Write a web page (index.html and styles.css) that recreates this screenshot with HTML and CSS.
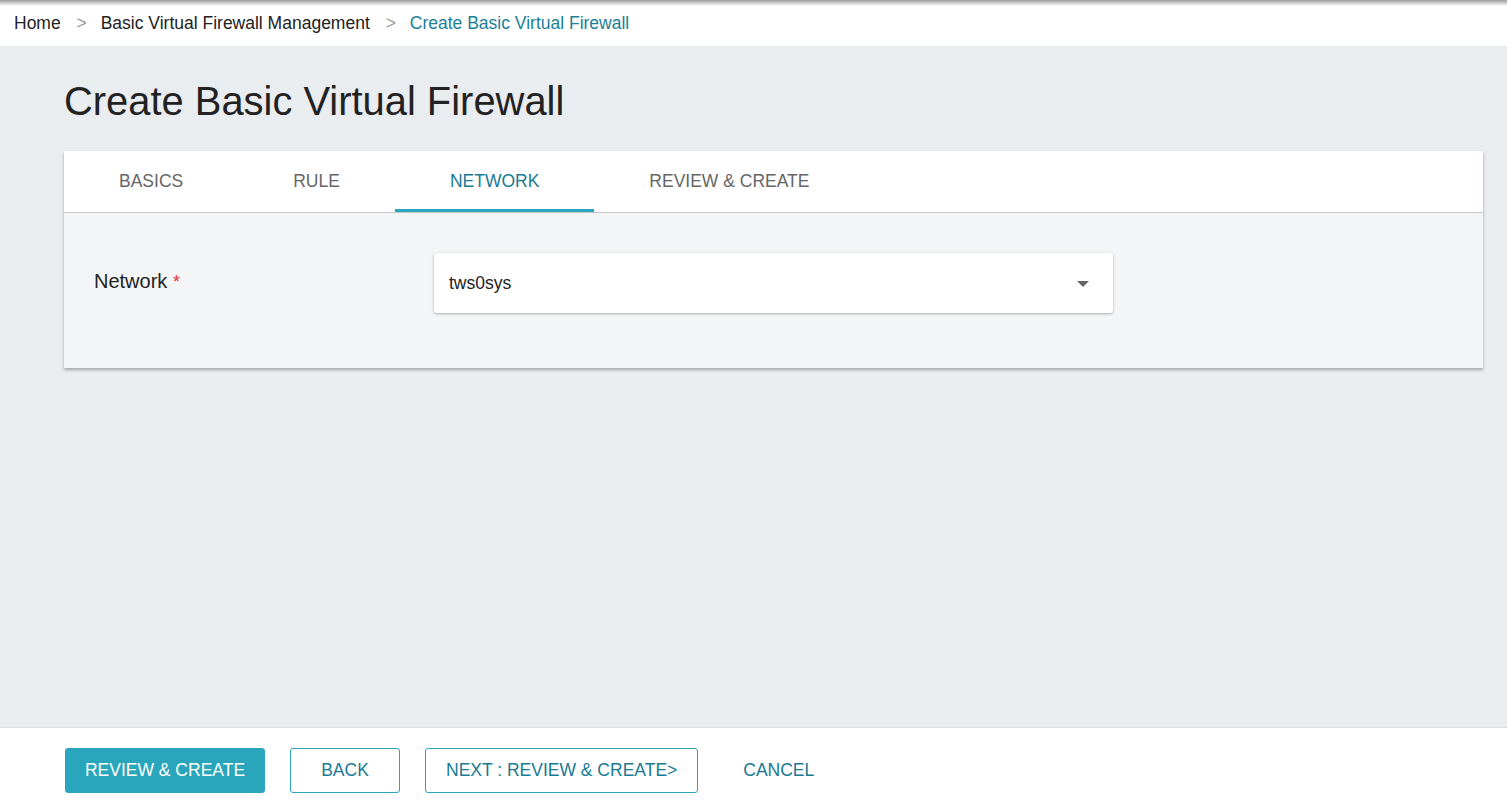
FILE: index.html
```html
<!DOCTYPE html>
<html lang="en">
<head>
    <meta charset="UTF-8">
    <meta name="viewport" content="width=device-width, initial-scale=1.0">
    <title>Create Basic Virtual Firewall</title>
    <link rel="stylesheet" href="styles.css">
</head>
<body>
    <nav class="breadcrumb">
        <a href="#">Home</a>
        <span class="sep">&gt;</span>
        <a href="#">Basic Virtual Firewall Management</a>
        <span class="sep">&gt;</span>
        <span class="current">Create Basic Virtual Firewall</span>
    </nav>

    <main class="content">
        <h1 class="page-title">Create Basic Virtual Firewall</h1>

        <div class="wizard">
            <ul class="tabs">
                <li class="tab">BASICS</li>
                <li class="tab">RULE</li>
                <li class="tab active">NETWORK</li>
                <li class="tab">REVIEW &amp; CREATE</li>
            </ul>

            <div class="panel">
                <div class="form-row">
                    <label class="form-label">Network <span class="required">*</span></label>
                    <div class="select">
                        <span class="select-value">tws0sys</span>
                        <span class="select-arrow"></span>
                    </div>
                </div>
            </div>
        </div>
    </main>

    <footer class="actions">
        <button class="btn btn-primary">REVIEW &amp; CREATE</button>
        <button class="btn btn-outline">BACK</button>
        <button class="btn btn-outline">NEXT : REVIEW &amp; CREATE&gt;</button>
        <button class="btn btn-text">CANCEL</button>
    </footer>
</body>
</html>
```

FILE: styles.css
```css
html, body {
    height: 100%;
}

body {
    font-family: 'Liberation Sans', Arial, sans-serif;
    font-size: 17.5px;
    margin: 0;
    padding: 0;
    color: #222;
    display: flex;
    flex-direction: column;
    background-color: #eaedf0;
}

/* breadcrumb bar */
.breadcrumb {
    height: 46px;
    line-height: 46px;
    padding-left: 14px;
    background: linear-gradient(#9d9d9d, #ffffff 6px);
    white-space: nowrap;
}

.breadcrumb a {
    color: #222;
    text-decoration: none;
}

.breadcrumb .sep {
    color: #9a9a9a;
    margin: 0 9px 0 11px;
}

.breadcrumb .current {
    color: #1a7f97;
}

/* main area */
.content {
    flex: 1;
    padding: 32px 24px 0 64px;
}

.page-title {
    margin: 0 0 25px 0;
    font-size: 39.9px;
    font-weight: normal;
    line-height: 1.2;
    color: #222;
}

.wizard {
    box-shadow: 0 2px 3px rgba(0, 0, 0, 0.3);
}

.tabs {
    list-style: none;
    margin: 0;
    padding: 0;
    display: flex;
    background-color: #fff;
    border-bottom: 1px solid #c6c6c6;
}

.tab {
    height: 61px;
    line-height: 61px;
    padding: 0 55px;
    color: #666;
    cursor: pointer;
    box-sizing: border-box;
}

.tab.active {
    color: #1a7a93;
    border-bottom: 3px solid #2aa5bb;
}

.panel {
    background-color: #f4f5f7;
    padding: 40px 30px 55px 30px;
}

.form-row {
    display: flex;
    align-items: flex-start;
}

.form-label {
    width: 340px;
    font-size: 20px;
    line-height: 56px;
    color: #222;
}

.required {
    color: #e0333d;
    font-size: 18px;
}

.select {
    width: 679px;
    height: 60px;
    box-sizing: border-box;
    background-color: #fff;
    border-radius: 3px;
    box-shadow: 0 1px 3px rgba(0, 0, 0, 0.3);
    display: flex;
    align-items: center;
    justify-content: space-between;
    padding: 0 24px 0 15px;
}

.select-value {
    padding-top: 1px;
}

.select-arrow {
    width: 0;
    height: 0;
    border-left: 6px solid transparent;
    border-right: 6px solid transparent;
    border-top: 6px solid #666;
    margin-top: 2px;
}

/* bottom action bar */
.actions {
    background-color: #fff;
    border-top: 1px solid #dcdcdc;
    height: 82px;
    box-sizing: border-box;
    padding: 20px 0 0 65px;
    display: flex;
    align-items: flex-start;
    gap: 25px;
}

.btn {
    font-family: inherit;
    font-size: 17.5px;
    height: 45px;
    min-width: 110px;
    padding: 0 20px;
    border-radius: 3px;
    cursor: pointer;
    box-sizing: border-box;
    white-space: nowrap;
}

.btn-primary {
    background-color: #29a6bc;
    border: 1px solid #29a6bc;
    color: #fff;
    min-width: 200px;
    padding: 0 18px;
}

.btn-outline {
    background-color: #fff;
    border: 1px solid #2aa5bb;
    color: #1a7a93;
}

.btn-text {
    background: none;
    border: none;
    color: #1a7a93;
    min-width: 0;
}
```
